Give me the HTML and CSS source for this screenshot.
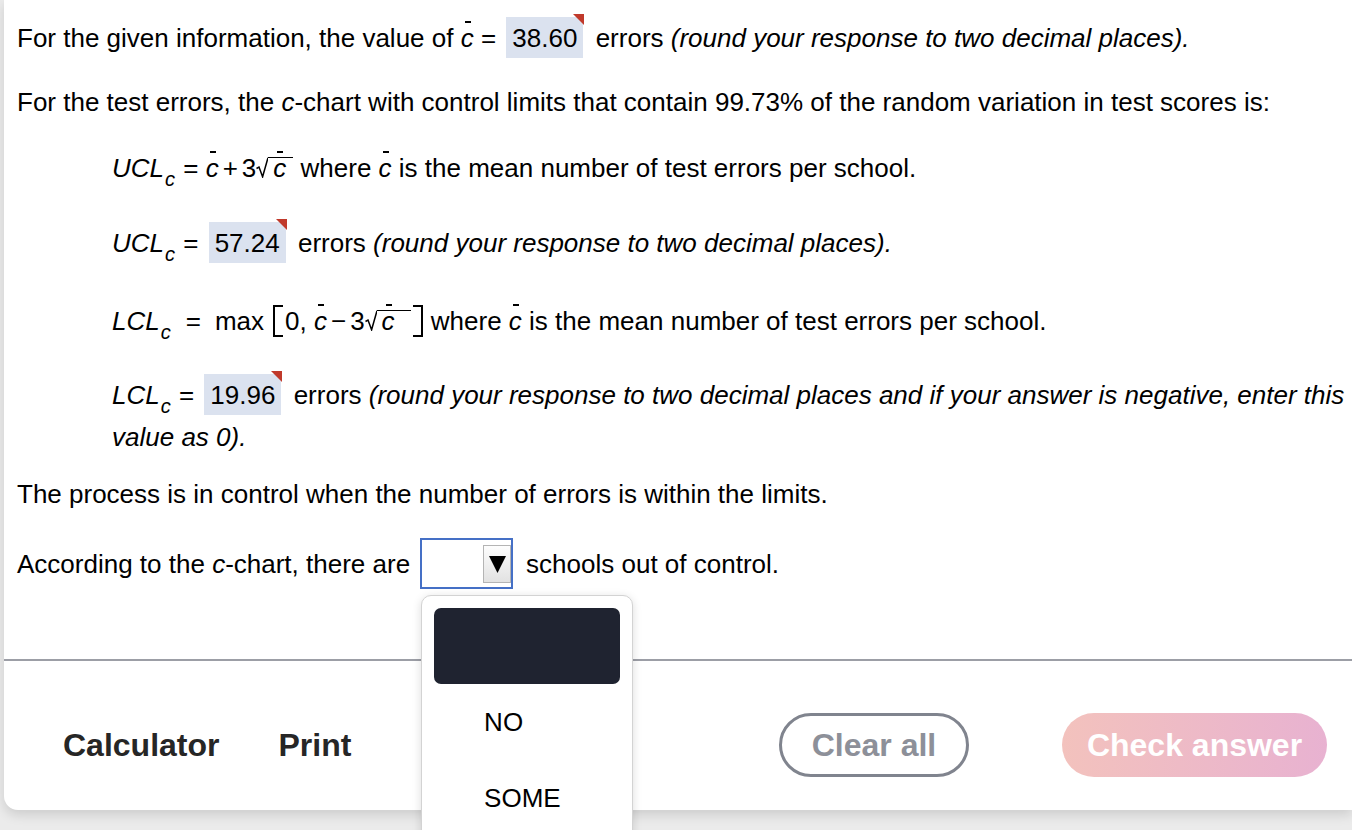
FILE: index.html
```html
<!DOCTYPE html>
<html lang="en">
<head>
<meta charset="utf-8">
<title>c-chart</title>
<link rel="stylesheet" href="styles.css">
</head>
<body>
<div class="card">
  <div class="content">
    <p class="p1">For the given information, the value of <span class="cb">c</span> = <span class="ans">38.60</span> errors <i>(round your response to two decimal places).</i></p>
    <p class="p2">For the test errors, the <i>c</i>-chart with control limits that contain 99.73% of the random variation in test scores is:</p>
    <p class="ind p3"><i>UCL</i><span class="sub">c</span> = <span class="cb">c</span><span class="op">+</span>3<span class="sqrt"><svg class="rad" width="12" height="21" viewBox="0 0 12 21"><polyline points="0.5,11.5 3,10 6.6,19.8 12,0.75" fill="none" stroke="#000" stroke-width="1.5"/></svg><span class="radicand"><span class="cb">c</span></span></span> where <span class="cb">c</span> is the mean number of test errors per school.</p>
    <p class="ind p4"><i>UCL</i><span class="sub">c</span> = <span class="ans">57.24</span> errors <i>(round your response to two decimal places).</i></p>
    <p class="ind p5"><i>LCL</i><span class="sub">c</span><span class="eq">=</span>max<span class="brk bl"></span>0, <span class="cb">c</span><span class="op">−</span>3<span class="sqrt"><svg class="rad" width="12" height="21" viewBox="0 0 12 21"><polyline points="0.5,11.5 3,10 6.6,19.8 12,0.75" fill="none" stroke="#000" stroke-width="1.5"/></svg><span class="radicand wide"><span class="cb">c</span></span></span><span class="brk br"></span> where <span class="cb">c</span> is the mean number of test errors per school.</p>
    <p class="ind p6"><i>LCL</i><span class="sub">c</span> = <span class="ans">19.96</span> errors <i>(round your response to two decimal places and if your answer is negative, enter this value as 0).</i></p>
    <p class="p7">The process is in control when the number of errors is within the limits.</p>
    <div class="row p8">
      <span>According to the <i>c</i>-chart, there are</span>
      <div class="select">
        <div class="arrow"><svg width="17" height="17" viewBox="0 0 17 17"><polygon points="0,0 17,0 8.5,17" fill="#000"/></svg></div>
        <div class="menu">
          <div class="opt sel"></div>
          <div class="opt">NO</div>
          <div class="opt">SOME</div>
        </div>
      </div>
      <span>schools out of control.</span>
    </div>
  </div>
  <div class="rule"></div>
  <div class="footer">
    <div class="tools">
      <span class="tool">Calculator</span>
      <span class="tool">Print</span>
    </div>
    <div class="actions">
      <button class="btn clear">Clear all</button>
      <button class="btn check">Check answer</button>
    </div>
  </div>
</div>
</body>
</html>
```

FILE: styles.css
```css
* { box-sizing: border-box; }
html, body { margin: 0; padding: 0; }
body {
  width: 1352px;
  height: 830px;
  overflow: hidden;
  background: #ebebeb;
  font-family: "Liberation Sans", Arial, Helvetica, sans-serif;
  color: #000;
}
.card {
  margin-left: 4px;
  height: 810px;
  background: #fff;
  border-bottom-left-radius: 14px;
  box-shadow: 0 5px 12px rgba(0, 0, 0, 0.13);
  position: relative;
}
.content {
  padding: 17px 0 0 13px;
  font-size: 26px;
  line-height: 42px;
}
.content p { margin: 0; }
.ind { padding-left: 95px; }
.p2 { margin-top: 22px !important; }
.p3 { margin-top: 24px !important; }
.p4 { margin-top: 33px !important; }
.p5 { margin-top: 36px !important; }
.p6 { margin-top: 32px !important; }
.p7 { margin-top: 15px !important; }

.cb { position: relative; font-style: italic; }
.cb::before {
  content: "";
  position: absolute;
  left: 4px;
  top: -2px;
  width: 6px;
  height: 2px;
  background: #000;
}
.sub {
  font-style: italic;
  font-size: 20px;
  line-height: 1;
  vertical-align: -9px;
  margin: 0 1px 0 1px;
}
.op { margin: 0 4px 0 4px; }
.eq { margin: 0 14px 0 14px; }
.sqrt { white-space: nowrap; }
.rad { vertical-align: -1px; }
.radicand {
  display: inline-block;
  border-top: 1.5px solid #000;
  padding: 0 7px 0 5px;
  line-height: 20px;
}
.radicand.wide { padding-right: 16px; }
.brk {
  display: inline-block;
  width: 10px;
  height: 32px;
  vertical-align: -7px;
  border: 2px solid #000;
}
.brk.bl { border-right: none; margin: 0 2px 0 9px; }
.brk.br { border-left: none; margin: 0 1px 0 2px; }

.ans {
  display: inline-block;
  position: relative;
  vertical-align: top;
  height: 41px;
  line-height: 42px;
  padding: 0 6px;
  margin: 0 5px 0 3px;
  background: #dbe2ef;
}
.ans::after {
  content: "";
  position: absolute;
  right: -1px;
  top: -3px;
  width: 0;
  height: 0;
  border-style: solid;
  border-width: 0 11px 11px 0;
  border-color: transparent #c0392b transparent transparent;
}

.row {
  display: flex;
  align-items: center;
  height: 51px;
  margin-top: 23px;
}
.select {
  position: relative;
  width: 93px;
  height: 51px;
  margin: 0 13px 0 10px;
  border: 2px solid #4570c6;
  background: #fff;
  display: flex;
  justify-content: flex-end;
  padding: 5px 0 0 0;
}
.arrow {
  width: 28px;
  height: 38px;
  border: 1px solid #b4b4b4;
  background: linear-gradient(#fdfdfd, #e2e2e2);
  display: flex;
  align-items: center;
  justify-content: center;
}
.menu {
  position: absolute;
  left: -1px;
  top: 55px;
  width: 212px;
  height: 260px;
  background: #fff;
  border: 1.5px solid #d3d3d3;
  border-radius: 10px;
  box-shadow: 0 2px 10px rgba(0, 0, 0, 0.14);
  padding: 12px 12px 0 12px;
  z-index: 10;
}
.opt {
  height: 76px;
  line-height: 76px;
  padding-left: 50px;
  font-size: 26px;
  color: #000;
}
.opt.sel {
  background: #1f2330;
  border-radius: 7px;
}

.rule {
  margin-top: 70px;
  height: 2px;
  background: #9c9ea6;
}
.footer {
  display: flex;
  justify-content: space-between;
  align-items: center;
  padding: 52px 25px 0 59px;
}
.tools {
  display: flex;
  gap: 59px;
}
.tool {
  font-size: 32px;
  font-weight: bold;
  color: #262626;
}
.actions {
  display: flex;
  gap: 93px;
}
.btn {
  font-family: "Liberation Sans", Arial, Helvetica, sans-serif;
  font-size: 32px;
  font-weight: bold;
  height: 64px;
  border-radius: 32px;
  cursor: pointer;
}
.clear {
  width: 190px;
  background: #fff;
  border: 3px solid #80848e;
  color: #8d9099;
}
.check {
  width: 265px;
  border: none;
  color: #fff;
  background: linear-gradient(90deg, #f3c2bd, #e8b2d1);
}
```
